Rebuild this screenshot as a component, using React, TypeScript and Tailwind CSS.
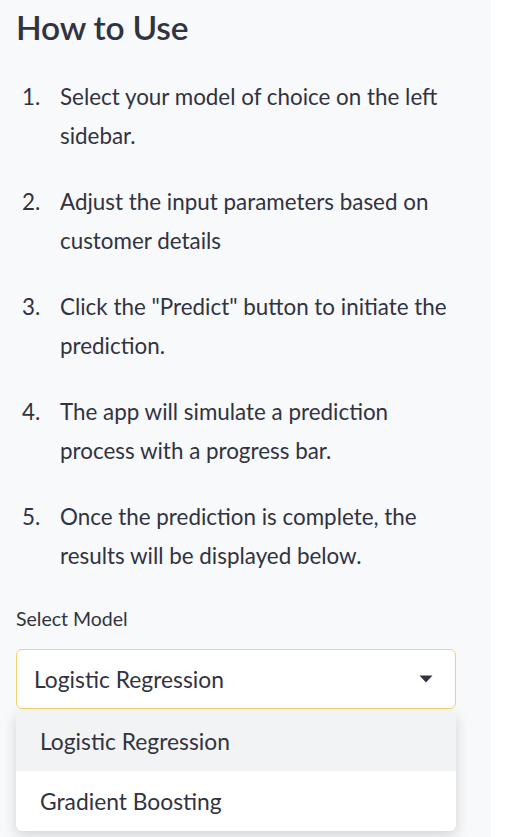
const steps = [
  'Select your model of choice on the left sidebar.',
  'Adjust the input parameters based on customer details',
  'Click the "Predict" button to initiate the prediction.',
  'The app will simulate a prediction process with a progress bar.',
  'Once the prediction is complete, the results will be displayed below.',
]

const options = ['Logistic Regression', 'Gradient Boosting']

export default function App() {
  return (
    <div
      className="flex h-[837px] w-[508px] overflow-hidden bg-white text-[#31333f]"
      style={{ fontFamily: 'Lato, "Noto Sans", sans-serif' }}
    >
      <aside className="flex w-[491px] flex-col bg-[#f8f9fb] px-4">
        <h2 className="mt-[5px] text-[33.5px] font-semibold leading-[44px] tracking-[-0.2px]">How to Use</h2>

        <ol className="mt-[28px] flex w-[445px] flex-col gap-[27px]">
          {steps.map((step, i) => (
            <li key={step} className="flex text-[22.4px] leading-[39px]">
              <span className="w-[44px] shrink-0 pl-[6px]">{i + 1}.</span>
              <span>{step}</span>
            </li>
          ))}
        </ol>

        <label className="mt-[30px] text-[19.5px] leading-[28px]">Select Model</label>

        <div className="relative mt-[16px] w-[440px]">
          <div className="flex h-[60px] items-center justify-between rounded-md border border-[#f3d46b] bg-white pl-[17px] pr-[20px] text-[22.8px]">
            <span>Logistic Regression</span>
            <svg width="16" height="10" viewBox="0 0 16 10" className="mr-[1px]">
              <path d="M1.5 1.5 L8 8.5 L14.5 1.5 Z" fill="#31333f" />
            </svg>
          </div>

          <ul className="absolute left-0 top-[62px] w-[440px] overflow-hidden rounded-md bg-white shadow-[0_4px_14px_rgba(0,0,0,0.16)]">
            {options.map((opt, i) => (
              <li
                key={opt}
                className={`flex h-[60px] items-center pl-[24px] text-[22.8px] ${i === 0 ? 'bg-[#f2f3f5]' : ''}`}
              >
                {opt}
              </li>
            ))}
          </ul>
        </div>
      </aside>
    </div>
  )
}
